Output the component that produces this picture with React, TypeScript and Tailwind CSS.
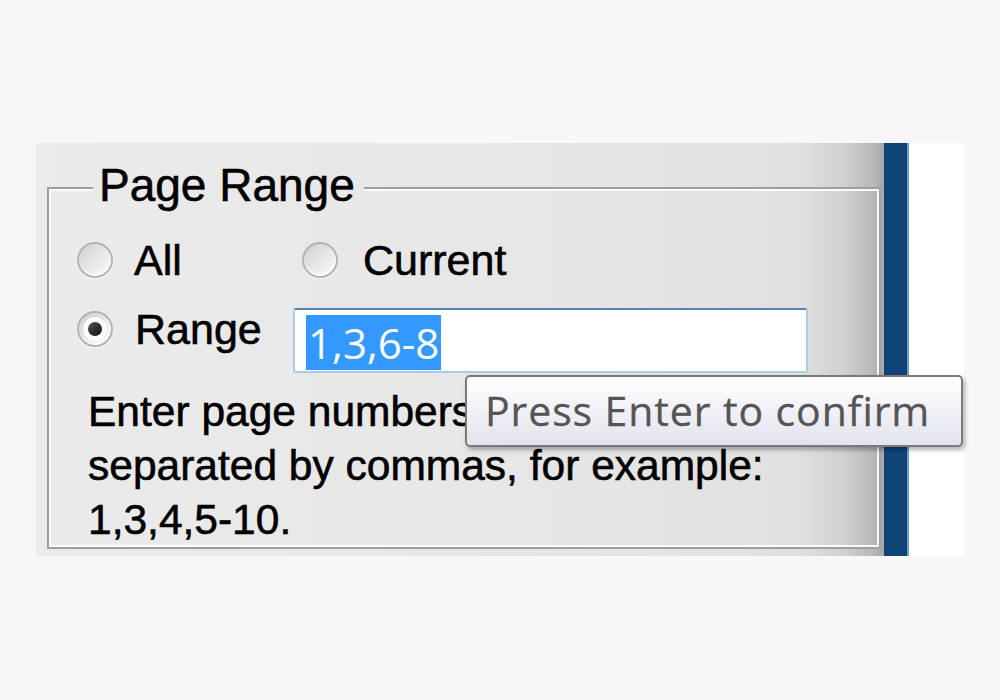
import React from "react";

const arial = { fontFamily: '"Liberation Sans", Arial, sans-serif' };
const segoe = { fontFamily: '"Open Sans", "Noto Sans", sans-serif' };

function Radio({ checked = false }: { checked?: boolean }) {
  return (
    <div className="w-[36px] h-[36px] shrink-0 rounded-full border-[2px] border-[#b4b4b4] bg-gradient-to-br from-[#cfcfcf] via-[#e6e6e6] to-[#fafafa] shadow-[inset_-1px_-2px_3px_rgba(255,255,255,0.9),0_1px_1px_rgba(255,255,255,0.8)] flex items-center justify-center">
      {checked && (
        <div className="w-[24px] h-[24px] rounded-full bg-[#fbfbfb] flex items-center justify-center">
          <div className="w-[14px] h-[14px] rounded-full bg-gradient-to-br from-[#555] to-[#111]" />
        </div>
      )}
    </div>
  );
}

export default function App() {
  return (
    <div className="w-[1000px] h-[700px] bg-[#f7f7f7] pl-[36px] pt-[143px]">
      <div className="relative flex w-[928px] h-[413px]">
        {/* dialog panel */}
        <div
          className="w-[848px] h-full pl-[11px] pt-[20px] bg-[linear-gradient(to_right,#ebebeb_0%,#e6e6e6_60%,#e0e0e0_90%,#d2d2d2_95%,#bababa_98.5%,#a8a8a8_100%)] text-black [-webkit-text-stroke:0.6px_#000]"
          style={arial}
        >
          <div className="w-[834px]">
            {/* group box caption */}
            <div className="flex h-[45px]">
              <div className="w-[46px] self-end h-[21px] border-t-2 border-l-2 border-[#9e9e9e]">
                <div className="h-full border-t-2 border-l-2 border-white/90" />
              </div>
              <span className="pl-[6px] pr-[9px] text-[46px] leading-[44px]">Page Range</span>
              <div className="flex-1 self-end h-[21px] border-t-2 border-r-2 border-[#9e9e9e]">
                <div className="h-full border-t-2 border-r-2 border-white/90" />
              </div>
            </div>
            {/* group box body */}
            <div className="border-x-2 border-b-2 border-[#9e9e9e]">
              <div className="border-x-2 border-b-2 border-white/90 h-[339px]">
                <div className="pl-[26px] pt-[32px]">
                  <div className="flex items-center h-[40px]">
                    <div className="flex items-center w-[225px]">
                      <Radio />
                      <span className="ml-[21px] text-[43px] leading-[40px]">All</span>
                    </div>
                    <div className="flex items-center">
                      <Radio />
                      <span className="ml-[25px] text-[43px] leading-[40px]">Current</span>
                    </div>
                  </div>
                  <div className="flex items-start mt-[28px]">
                    <div className="flex items-center h-[42px] w-[216px]">
                      <Radio checked />
                      <span className="ml-[22px] text-[43px] leading-[40px]">Range</span>
                    </div>
                    <div className="w-[515px] h-[65px] rounded-[3px] border-2 border-[#a9cbe6] border-t-[#4f86b8] bg-white pl-[11px] pt-[5px]">
                      <span
                        className="inline-block h-[55px] bg-[#3399ff] text-white text-[42px] leading-[55px] px-[2px] [-webkit-text-stroke:0px]"
                        style={segoe}
                      >
                        1,3,6-8
                      </span>
                    </div>
                  </div>
                </div>
                <p className="pl-[37px] mt-[12px] text-[42.5px] leading-[54px]">
                  Enter page numbers
                  <br />
                  separated by commas, for example:
                  <br />
                  1,3,4,5-10.
                </p>
              </div>
            </div>
          </div>
        </div>
        {/* window frame edge */}
        <div className="w-[25px] h-full bg-[#0f4479] border-r-2 border-[#6b9bd0]" />
        <div className="flex-1 h-full bg-white" />

        {/* tooltip */}
        <div
          className="absolute left-[429px] top-[232px] w-[498px] h-[72px] rounded-[5px] border-2 border-[#7a7a7a] bg-gradient-to-b from-white to-[#e2e3ee] shadow-[2px_3px_4px_rgba(0,0,0,0.3)] flex items-center pl-[18px] text-[#555] text-[41px] tracking-[0.9px] [-webkit-text-stroke:0.3px_#555]"
          style={segoe}
        >
          Press Enter to confirm
        </div>
      </div>
    </div>
  );
}
